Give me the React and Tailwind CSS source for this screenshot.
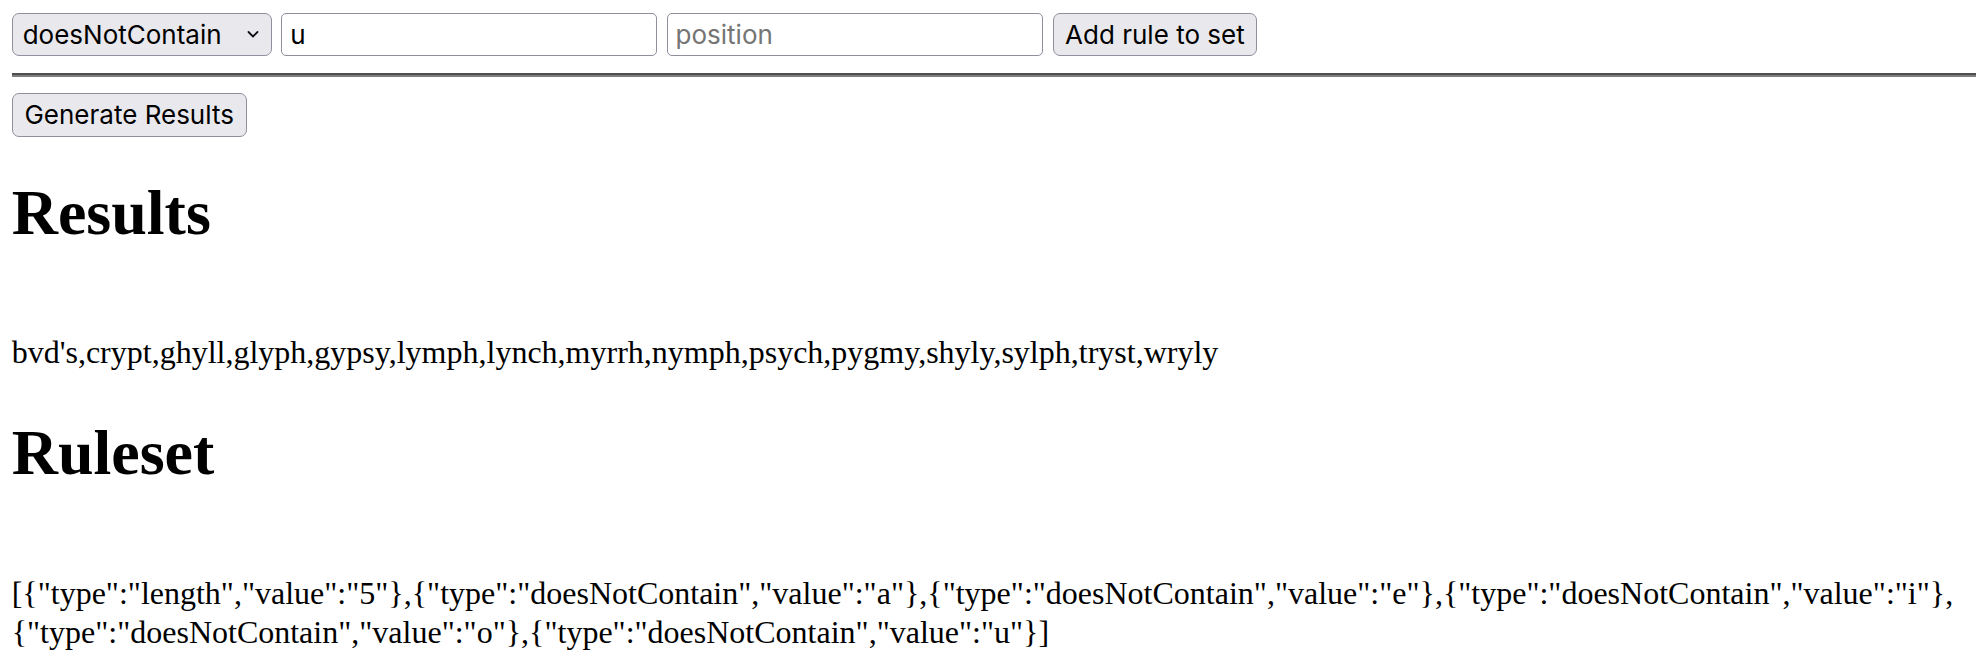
import React from "react";

const RESULTS =
  "bvd's,crypt,ghyll,glyph,gypsy,lymph,lynch,myrrh,nymph,psych,pygmy,shyly,sylph,tryst,wryly";

const RULES = [
  { type: "length", value: "5" },
  { type: "doesNotContain", value: "a" },
  { type: "doesNotContain", value: "e" },
  { type: "doesNotContain", value: "i" },
  { type: "doesNotContain", value: "o" },
  { type: "doesNotContain", value: "u" },
];

function RuleControls() {
  return (
    <div className="flex h-[42.7px] items-stretch gap-[9.6px] font-['Inter','Liberation_Sans',sans-serif] text-[26px] text-black">
      <div className="relative w-[260px]">
        <select
          defaultValue="doesNotContain"
          className="h-full w-full appearance-none rounded-[7px] border-[1.5px] border-[#8f8f9d] bg-[#e9e9ed] pl-[10px] text-black outline-none"
        >
          <option value="length">length</option>
          <option value="contains">contains</option>
          <option value="doesNotContain">doesNotContain</option>
        </select>
        <svg
          className="pointer-events-none absolute right-[13px] top-[17px] h-[9px] w-[12px]"
          viewBox="0 0 12 9"
          fill="none"
          stroke="#111"
          strokeWidth="1.8"
          strokeLinecap="round"
          strokeLinejoin="round"
        >
          <path d="M1.5 2 L6 6.5 L10.5 2" />
        </svg>
      </div>
      <input
        defaultValue="u"
        className="w-[375.7px] rounded-[5px] border-[1.5px] border-[#8f8f9d] bg-white px-[8px] text-black outline-none"
      />
      <input
        placeholder="position"
        className="w-[376.6px] rounded-[5px] border-[1.5px] border-[#8f8f9d] bg-white px-[8px] text-black outline-none placeholder:text-[#757575]"
      />
      <button className="w-[204.3px] rounded-[7px] border-[1.5px] border-[#8f8f9d] bg-[#e9e9ed] text-black">
        Add rule to set
      </button>
    </div>
  );
}

export default function App() {
  return (
    <div className="min-h-[672px] bg-white pl-[11.7px] pt-[13.3px] font-['Liberation_Serif','Times_New_Roman',serif] text-black">
      <RuleControls />
      <hr className="mt-[17.3px] h-[4px] border-0 border-t-2 border-b-2 border-t-[#4f4f4f] border-b-[#7d7d7d]" />
      <button className="mt-[16px] h-[43.4px] w-[235px] rounded-[7px] border-[1.5px] border-[#8f8f9d] bg-[#e9e9ed] font-['Inter','Liberation_Sans',sans-serif] text-[26px] text-black">
        Generate Results
      </button>
      <h1 className="mt-[39px] text-[64px] font-bold leading-[74px]">Results</h1>
      <p className="mt-[81.5px] text-[32px] leading-[42px]">{RESULTS}</p>
      <h1 className="mt-[43.2px] text-[64px] font-bold leading-[74px]">Ruleset</h1>
      <p className="mt-[83.9px] pr-[11.7px] text-[32px] leading-[38.4px]">{JSON.stringify(RULES)}</p>
    </div>
  );
}
